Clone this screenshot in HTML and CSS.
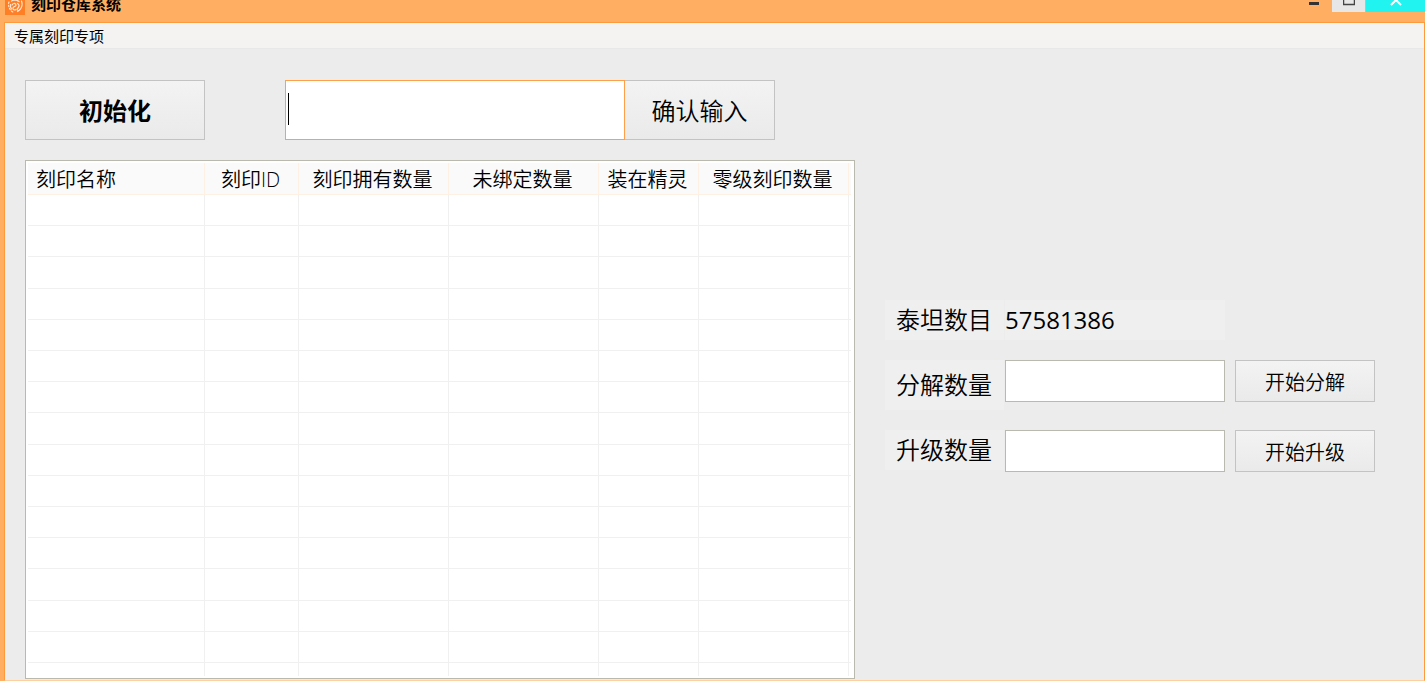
FILE: index.html
```html
<!DOCTYPE html>
<html lang="zh-CN">
<head>
<meta charset="utf-8">
<title>刻印仓库系统</title>
<link rel="stylesheet" href="styles.css">
</head>
<body>
<div class="window">
  <header class="titlebar">
    <svg class="app-icon" viewBox="0 0 20 15" aria-hidden="true">
      <rect width="20" height="15" fill="#ff7f27"/>
      <g fill="none" stroke="#ffe6d2" stroke-width="1.2" stroke-linecap="round">
        <path d="M4 2C2.500 5 4.500 11 9 12.500" stroke-dasharray="1.500 1.800"/>
        <path d="M16.500 1c1.500 4 0 8.500-4 10.500" stroke-dasharray="3 1"/>
        <path d="M6.500 1c3-1.500 6-1 8 1" stroke-dasharray="2 1"/>
        <path d="M7 5c1-2 3.500-2 4-.2s-2.500 1.500-3 3.200 1.500 2.500 3 1.500"/>
        <path d="M12.500 3.500c2 1 2 3 .5 4.500s-1 2.500.5 2.500"/>
        <path d="M5.500 4.500c-.5 2 0 3 1 4.500"/>
      </g>
    </svg>
    <h1 class="title">刻印仓库系统</h1>
    <div class="controls">
      <button class="control minimize" type="button" aria-label="最小化">
        <svg viewBox="0 0 12 6"><path d="M1 3.500h10" stroke="#333" stroke-width="3"/></svg>
      </button>
      <button class="control maximize" type="button" aria-label="最大化">
        <svg viewBox="0 0 12 6"><path d="M.5 0v4.500h11V0" fill="none" stroke="#444" stroke-width="1.500"/></svg>
      </button>
      <button class="control close" type="button" aria-label="关闭">
        <svg viewBox="0 0 12 6"><path d="M1 5l5-5 5 5" fill="none" stroke="#fff" stroke-width="2"/></svg>
      </button>
    </div>
  </header>
  <div class="client">
    <nav class="menubar"><button class="menu-item" type="button">专属刻印专项</button></nav>
    <main class="content">
      <section class="left">
        <div class="toolbar">
          <button class="button button-init" type="button">初始化</button>
          <form class="entry">
            <input class="field field-entry" type="text" aria-label="输入" autofocus>
            <button class="button button-confirm" type="button">确认输入</button>
            <span class="caret"></span>
          </form>
        </div>
        <div class="list">
          <table class="grid">
            <colgroup>
              <col class="col-name"><col class="col-id"><col class="col-wide"><col class="col-wide"><col class="col-pet"><col class="col-wide"><col class="col-rest">
            </colgroup>
            <thead>
              <tr><th class="first">刻印名称</th><th>刻印ID</th><th>刻印拥有数量</th><th>未绑定数量</th><th>装在精灵</th><th>零级刻印数量</th><th class="rest"></th></tr>
            </thead>
            <tbody>
              <tr><td></td><td></td><td></td><td></td><td></td><td></td><td></td></tr>
              <tr><td></td><td></td><td></td><td></td><td></td><td></td><td></td></tr>
              <tr><td></td><td></td><td></td><td></td><td></td><td></td><td></td></tr>
              <tr><td></td><td></td><td></td><td></td><td></td><td></td><td></td></tr>
              <tr><td></td><td></td><td></td><td></td><td></td><td></td><td></td></tr>
              <tr><td></td><td></td><td></td><td></td><td></td><td></td><td></td></tr>
              <tr><td></td><td></td><td></td><td></td><td></td><td></td><td></td></tr>
              <tr><td></td><td></td><td></td><td></td><td></td><td></td><td></td></tr>
              <tr><td></td><td></td><td></td><td></td><td></td><td></td><td></td></tr>
              <tr><td></td><td></td><td></td><td></td><td></td><td></td><td></td></tr>
              <tr><td></td><td></td><td></td><td></td><td></td><td></td><td></td></tr>
              <tr><td></td><td></td><td></td><td></td><td></td><td></td><td></td></tr>
              <tr><td></td><td></td><td></td><td></td><td></td><td></td><td></td></tr>
              <tr><td></td><td></td><td></td><td></td><td></td><td></td><td></td></tr>
              <tr><td></td><td></td><td></td><td></td><td></td><td></td><td></td></tr>
              <tr class="partial"><td></td><td></td><td></td><td></td><td></td><td></td><td></td></tr>
            </tbody>
          </table>
        </div>
      </section>
      <section class="side">
        <div class="row row-total">
          <span class="label">泰坦数目</span>
          <output class="total">57581386</output>
        </div>
        <div class="row">
          <label class="label label-tall" for="split">分解数量</label>
          <input class="field field-count" id="split" type="text">
          <button class="button button-action" type="button">开始分解</button>
        </div>
        <div class="row">
          <label class="label" for="upgrade">升级数量</label>
          <input class="field field-count" id="upgrade" type="text">
          <button class="button button-action" type="button">开始升级</button>
        </div>
      </section>
    </main>
  </div>
</div>
</body>
</html>
```

FILE: styles.css
```css
* {
  box-sizing: border-box;
}

body {
  margin: 0;
  font-family: "Open Sans", "Noto Sans CJK SC", sans-serif;
  font-weight: 350;
  color: #000;
}

button,
input {
  font-family: inherit;
  font-weight: inherit;
  color: inherit;
  border-radius: 0;
  margin: 0;
  outline: none;
}

.window {
  display: flex;
  flex-direction: column;
  min-height: 100vh;
  padding-left: 4px;
  background: #ffae62;
}

.titlebar {
  display: flex;
  align-items: flex-start;
  height: 22px;
}

.app-icon {
  width: 20px;
  height: 15px;
  margin-left: 1px;
}

.title {
  margin: 0 0 0 6px;
  font-size: 15px;
  line-height: 8px;
  font-weight: 700;
}

.controls {
  display: flex;
  margin-left: auto;
}

.control {
  display: flex;
  justify-content: center;
  align-items: flex-start;
  height: 12px;
  padding: 0;
  border: 0;
  background: none;
}

.control svg {
  width: 12px;
  height: 6px;
}

.minimize {
  width: 36px;
}

.maximize {
  width: 33px;
  background: #e7e7e7;
}

.close {
  width: 59px;
  margin-left: 1px;
  background: #20f3f0;
}

.client {
  flex: 1;
  display: flex;
  flex-direction: column;
  border: 1px solid #ff9a3c;
  border-bottom-color: #ffcfa0;
  background: #ececec;
}

.menubar {
  height: 26px;
  padding-left: 9px;
  background: #f4f3f1;
  border-bottom: 1px solid #e8e8e8;
}

.menu-item {
  padding: 0;
  border: 0;
  background: none;
  font-size: 15px;
  line-height: 26px;
  font-weight: 400;
}

.content {
  display: flex;
  gap: 30px;
  padding: 31px 20px 0;
}

.left {
  flex: 0 0 830px;
}

.toolbar {
  display: flex;
  gap: 80px;
  margin-bottom: 20px;
}

.entry {
  position: relative;
  display: flex;
}

.button {
  padding: 0;
  border: 1px solid #c3c3c3;
  background: linear-gradient(#f3f3f3, #eaeaea);
}

.button-init,
.button-confirm {
  height: 60px;
  padding-bottom: 2px;
  font-size: 24px;
}

.button-init {
  width: 180px;
  font-weight: 700;
}

.button-confirm {
  width: 150px;
  border-left: 0;
}

.field {
  padding: 0 4px;
  border: 1px solid #b9b9b0;
  background: #fff;
}

.field-entry {
  width: 340px;
  height: 60px;
  border-color: #ff9f4a;
  font-size: 24px;
  caret-color: transparent;
}

.caret {
  position: absolute;
  left: 3px;
  top: 13px;
  width: 1px;
  height: 32px;
  background: #000;
}

.list {
  padding: 2px 3px 2px 2px;
  border: 1px solid #b9b9ad;
  background: #fff;
}

.grid {
  width: 100%;
  table-layout: fixed;
  border-collapse: separate;
  border-spacing: 0;
}

.col-name {
  width: 177px;
}

.col-id {
  width: 94px;
}

.col-wide {
  width: 150px;
}

.col-pet {
  width: 100px;
}

.grid th {
  height: 32px;
  padding: 3px 2px 0 0;
  border-right: 1px solid #fff0e4;
  border-bottom: 1px solid #fff0e4;
  background: #fafafa;
  font-size: 20px;
  line-height: 28px;
  font-weight: inherit;
  white-space: nowrap;
}

.grid th.first {
  padding-left: 8px;
  text-align: left;
}

.grid td {
  height: 31px;
  padding: 0;
  border-right: 1px solid #f0f0f0;
  border-bottom: 1px solid #f0f0f0;
}

.grid tr:nth-child(5n + 3) td {
  height: 32px;
}

.grid th:last-child,
.grid td:last-child {
  border-right: 0;
}

.grid .partial td {
  height: 13px;
  border-bottom: 0;
}

.side {
  flex: 1;
  display: flex;
  flex-direction: column;
  gap: 20px;
  padding-top: 220px;
}

.row {
  display: flex;
  align-items: flex-start;
  height: 50px;
}

.row-total {
  height: 40px;
}

.label {
  width: 119px;
  height: 40px;
  padding-left: 11px;
  margin-right: 1px;
  background: #efefef;
  font-size: 24px;
  line-height: 40px;
}

.label-tall {
  height: 50px;
  line-height: 50px;
}

.total {
  width: 220px;
  height: 40px;
  background: #efefef;
  font-size: 24px;
  line-height: 40px;
  font-weight: 500;
}

.field-count {
  width: 220px;
  height: 42px;
  font-size: 20px;
}

.button-action {
  width: 140px;
  height: 42px;
  margin-left: 10px;
  font-size: 20px;
}
```
